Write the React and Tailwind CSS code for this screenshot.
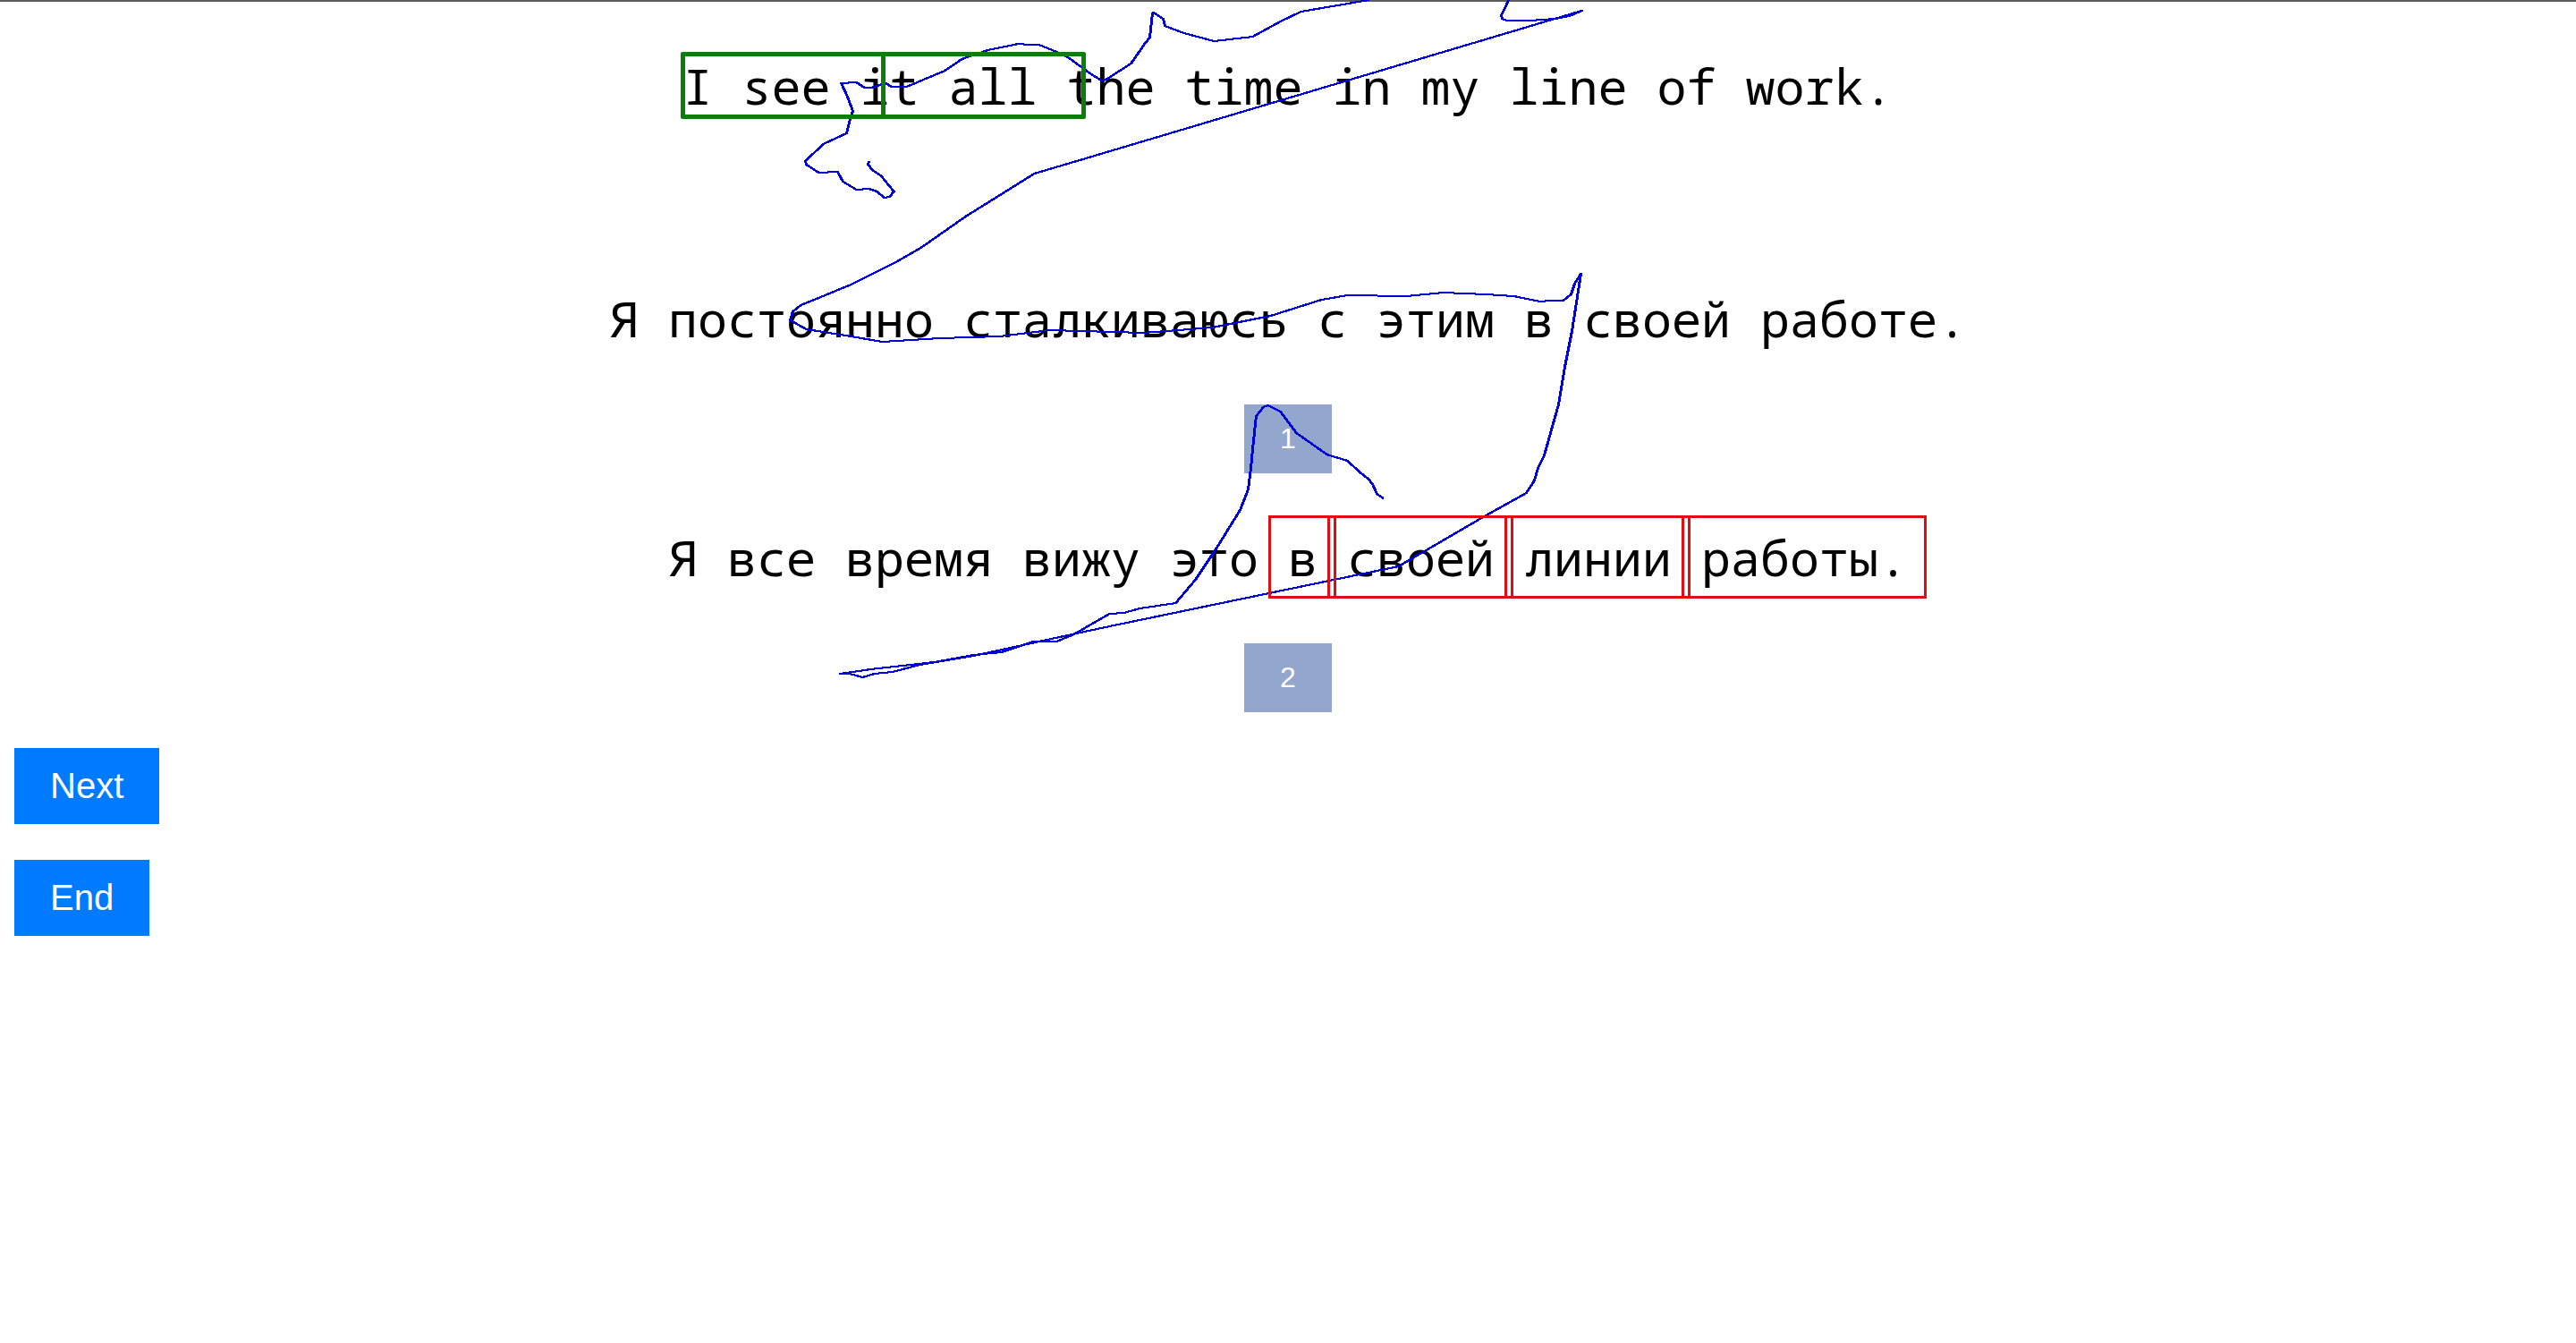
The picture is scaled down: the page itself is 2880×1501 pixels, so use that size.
const gazeUpper =
  "971,180 970,184 975,190 985,197 993,207 999,214 994,220 988,221 980,214 971,211 957,212 942,203 936,192 915,193 901,184 900,180 920,161 946,149 950,133 953,124 947,108 940,93 957,92 966,98 974,98 986,94 990,93 996,97 1013,97 1056,79 1075,66 1104,56 1138,49 1150,50 1161,50 1181,58 1195,65 1218,82 1231,90 1236,89 1264,71 1280,48 1285,42 1288,15 1289,14 1300,21 1302,29 1323,37 1357,46 1400,41 1431,24 1454,13 1530,0";

const gazeLower =
  "1686,0 1683,7 1678,17 1679,21 1684,23 1710,23 1738,21 1754,18 1768,12 1200,181 1156,194 1079,242 1029,277 1001,293 951,318 922,330 895,341 886,348 883,358 901,368 951,376 986,382 1050,378 1117,376 1173,369 1278,372 1355,366 1420,353 1477,335 1506,330 1572,331 1613,327 1661,329 1692,331 1721,337 1734,336 1747,336 1756,329 1760,317 1767,306 1757,370 1749,410 1742,452 1726,509 1719,523 1715,537 1706,551 1661,576 1563,633 1240,700 1198,709 1088,733 1028,743 997,751 977,753 964,757 949,753 939,753 973,748 1044,740 1088,732 1119,729 1155,717 1181,717 1200,709 1240,686 1256,685 1274,680 1314,674 1336,648 1360,612 1386,570 1395,547 1398,523 1400,502 1402,483 1404,465 1412,455 1417,453 1431,460 1449,484 1483,508 1506,515 1520,528 1529,535 1534,541 1539,552 1546,557";

const sentence =
  "whitespace-pre text-center font-['Noto_Sans_Mono','DejaVu_Sans_Mono',monospace] text-[55px] leading-[70px] text-black";
const greenBox = "absolute top-0 h-[75px] w-[229px] rounded-xs border-[5px] border-[#068006]";

function ChoiceButton({ children }) {
  return (
    <button type="button" className="bg-[#92a6ce] px-10 py-5 text-[32px] leading-[37px] text-white">
      {children}
    </button>
  );
}

function ActionButton({ children }) {
  return (
    <button type="button" className="bg-[#007bff] px-10 py-5 text-[40px] leading-[45px] text-white">
      {children}
    </button>
  );
}

function ErrorWord({ children }) {
  return (
    <span className="relative">
      {children}
      <span className="absolute -top-[9px] -right-[21px] -left-[22px] z-20 h-[93px] border-3 border-[#e00e12]" />
    </span>
  );
}

export default function App() {
  return (
    <main className="relative flex min-h-screen flex-col overflow-hidden bg-white font-['Liberation_Sans',Arial,sans-serif]">
      <div className="h-0.5 bg-[#5c5a5b]" />
      <p className={`${sentence} pt-[59px]`}>
        <span className="relative z-20">
          <span className={`${greenBox} -left-[2px]`} />
          <span className={`${greenBox} left-[222px]`} />
        </span>
        I see it all the time in my line of work.
      </p>

      <section className="flex flex-col pt-[190px]">
        <p className={sentence}>Я постоянно сталкиваюсь с этим в своей работе.</p>
        <div className="flex justify-center pt-[61px]">
          <ChoiceButton>1</ChoiceButton>
        </div>
      </section>

      <section className="flex flex-col pt-[59px]">
        <p className={sentence}>
          Я все время вижу это <ErrorWord>в</ErrorWord> <ErrorWord>своей</ErrorWord>{" "}
          <ErrorWord>линии</ErrorWord> <ErrorWord>работы.</ErrorWord>
        </p>
        <div className="flex justify-center pt-[61px]">
          <ChoiceButton>2</ChoiceButton>
        </div>
      </section>

      <div className="flex flex-col items-start gap-10 px-4 pt-10">
        <ActionButton>Next</ActionButton>
        <ActionButton>End</ActionButton>
      </div>

      {/* Gaze trace: each line is doubled sideways so steep strokes look heavier than flat ones */}
      <svg
        aria-hidden="true"
        viewBox="0 0 2880 800"
        className="pointer-events-none absolute top-0 left-1/2 z-10 h-[800px] w-[2880px] max-w-none -translate-x-1/2"
        fill="none"
        stroke="#0000d8"
        strokeWidth="2"
        strokeLinejoin="round"
        shapeRendering="crispEdges"
      >
        <polyline points={gazeUpper} />
        <polyline points={gazeLower} />
        <g transform="translate(1 0)">
          <polyline points={gazeUpper} />
          <polyline points={gazeLower} />
        </g>
      </svg>
    </main>
  );
}
